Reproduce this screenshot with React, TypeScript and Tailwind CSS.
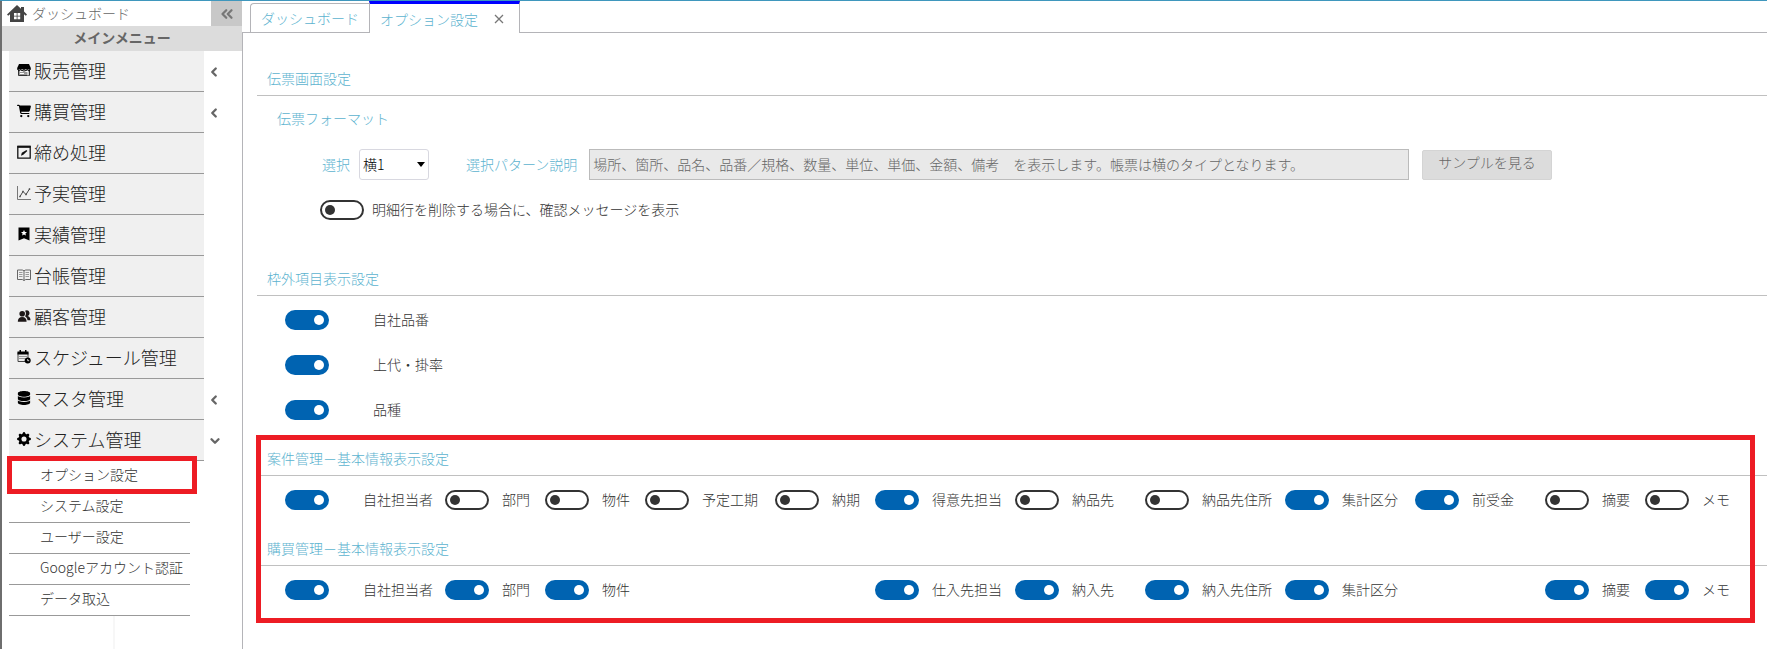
import React from "react";
import { FaCartShopping, FaDatabase } from "react-icons/fa6";
import { BsGearFill } from "react-icons/bs";
import { FiChevronLeft, FiChevronDown, FiChevronsLeft } from "react-icons/fi";

const HomeIcon = () => (
  <svg viewBox="0 0 20 18" className="h-[18px] w-5" fill="#444" aria-hidden="true">
    <path d="M10 0L0 9.500l1.200 1.200L3 9.300V17h14V9.300l1.800 1.400L20 9.500l-3-2.900V2h-3v1.800z" />
    <path d="M7 8h2.700v2.700H7zM10.500 8h2.700v2.700h-2.700zM7 11.500h2.700v2.700H7zM10.500 11.500h2.700v2.700h-2.700z" fill="#fff" />
  </svg>
);

const ShopIcon = () => (
  <svg viewBox="0 0 14 14" className="size-[14px]" aria-hidden="true">
    <path d="M2 1h10l1.800 4v1.500H.2V5z" />
    <path d="M1.500 6v6.500h11V6" fill="#999" stroke="#333" />
    <path d="M3 8.500h3M8 8.500h3v4M3 10.500h4" stroke="#fff" fill="none" />
    <path d="M.5 6.500l1.300 1.200L3.500 6.500l1.700 1.200L7 6.500l1.700 1.200 1.700-1.200 1.800 1.200 1.300-1.200" stroke="#000" fill="none" />
  </svg>
);

const CloseBookIcon = () => (
  <svg viewBox="0 0 14 14" className="size-[14px]" aria-hidden="true">
    <path d="M.8 1.500h12.400v11.700H.8z" fill="none" stroke="#111" strokeWidth="1.300" />
    <path d="M.5 1.800h13" stroke="#111" strokeWidth="2" />
    <path d="M4 10.800l.8-3L9.500 5l.8 1-4 3.700z" fill="#111" />
  </svg>
);

const ChartIcon = () => (
  <svg viewBox="0 0 14 14" className="size-[14px]" fill="none" stroke="#444" aria-hidden="true">
    <path d="M.5 0v13.500H14" stroke="#777" />
    <path d="M3 10.500l3-5 3 3 3.500-5.500" />
    <path d="M2.300 10.500h1.400M5.300 5.500h1.400M8.300 8.500h1.400M11.800 3h1.400" strokeWidth="1.600" />
  </svg>
);

const BookmarkIcon = () => (
  <svg viewBox="0 0 14 14" className="size-[14px]" aria-hidden="true">
    <path d="M1.500.5h11v13L7 11.300 1.500 13.500z" />
    <path d="M7 3l.9 1.900 2.100.2-1.600 1.400.5 2.100L7 7.500 5.100 8.600l.5-2.100L4 5.100l2.100-.2z" fill="#fff" />
  </svg>
);

const BookIcon = () => (
  <svg viewBox="0 0 14 14" className="size-[14px]" fill="none" stroke="#666" aria-hidden="true">
    <path d="M.5 2h4.800L7 2.800 8.700 2h4.800v9.500H8.700L7 12.500l-1.700-1H.5zM7 3v9.500" />
    <path d="M2 4.500h3.500M2 6.500h3.500M2 8.500h3.500M8.500 4.500H12M8.500 6.500H12M8.500 8.500H12" stroke="#999" />
  </svg>
);

const CustomerIcon = () => (
  <svg viewBox="0 0 14 14" className="size-[14px]" fill="#1c1616" aria-hidden="true">
    <circle cx="5.200" cy="4.800" r="2.800" />
    <path d="M.8 12.800c0-3 1.500-4.800 4.400-4.800s4.400 1.800 4.400 4.800z" />
    <path d="M8 1.700c2.300-1.400 4.500 0 4.500 2.200 0 1.700-1 2.800-2 3.100 2 .5 3 2 3 4.200h-3C10.300 9.300 9.300 8 8 7.300c1.200-1.600 1.300-4 0-5.600z" />
  </svg>
);

const ScheduleIcon = () => (
  <svg viewBox="0 0 14 14" className="size-[14px]" aria-hidden="true">
    <path d="M1 2.500h10v9H1z" fill="#ededed" stroke="#444" />
    <path d="M.5 1.500h11v3H.5zM2.500 0h1.500v2H2.500zM8 0h1.500v2H8z" />
    <path d="M2.500 6.500h7M2.500 8.500h5" stroke="#444" strokeDasharray="1 1" />
    <circle cx="10.700" cy="10.500" r="3" />
    <path d="M10.700 9v1.700h1.500" fill="none" stroke="#fff" strokeWidth=".8" />
  </svg>
);

type MenuItem = {
  label: string;
  icon: React.ReactNode;
  chevron?: "left" | "down";
};

const menu: MenuItem[] = [
  { label: "販売管理", icon: <ShopIcon />, chevron: "left" },
  { label: "購買管理", icon: <FaCartShopping />, chevron: "left" },
  { label: "締め処理", icon: <CloseBookIcon /> },
  { label: "予実管理", icon: <ChartIcon /> },
  { label: "実績管理", icon: <BookmarkIcon /> },
  { label: "台帳管理", icon: <BookIcon /> },
  { label: "顧客管理", icon: <CustomerIcon /> },
  { label: "スケジュール管理", icon: <ScheduleIcon /> },
  { label: "マスタ管理", icon: <FaDatabase />, chevron: "left" },
  { label: "システム管理", icon: <BsGearFill />, chevron: "down" },
];

const subMenu = ["オプション設定", "システム設定", "ユーザー設定", "Googleアカウント認証", "データ取込"];

type Option = { label: string; on: boolean } | null;

const projectOptions: Option[] = [
  { label: "自社担当者", on: true },
  { label: "部門", on: false },
  { label: "物件", on: false },
  { label: "予定工期", on: false },
  { label: "納期", on: false },
  { label: "得意先担当", on: true },
  { label: "納品先", on: false },
  { label: "納品先住所", on: false },
  { label: "集計区分", on: true },
  { label: "前受金", on: true },
  { label: "摘要", on: false },
  { label: "メモ", on: false },
];

// null keeps the column empty so both rows line up
const purchaseOptions: Option[] = [
  { label: "自社担当者", on: true },
  { label: "部門", on: true },
  { label: "物件", on: true },
  null,
  null,
  { label: "仕入先担当", on: true },
  { label: "納入先", on: true },
  { label: "納入先住所", on: true },
  { label: "集計区分", on: true },
  null,
  { label: "摘要", on: true },
  { label: "メモ", on: true },
];

function Toggle({ label, on, gap }: { label: string; on: boolean; gap: string }) {
  return (
    <label className={`flex h-5 items-center whitespace-nowrap ${gap}`}>
      <input type="checkbox" role="switch" defaultChecked={on} className="peer sr-only" />
      <span className="flex h-5 w-11 shrink-0 items-center rounded-full border-2 border-[#333] bg-white px-[3px] before:size-[10px] before:rounded-full before:bg-[#333] peer-checked:justify-end peer-checked:border-[#0063b1] peer-checked:bg-[#0063b1] peer-checked:before:bg-white" />
      <span className="pb-[3px] leading-5">{label}</span>
    </label>
  );
}

function SectionTitle({ children }: { children: React.ReactNode }) {
  return (
    <h2 className="flex h-8 items-center border-b border-[#c0c0c0] pb-1 pl-[10px] text-[#5cb3cf]">
      {children}
    </h2>
  );
}

function OptionRow({ options }: { options: Option[] }) {
  return (
    <div className="grid grid-cols-[160px_100px_100px_130px_100px_140px_130px_140px_130px_130px_100px_1fr] pt-[14px] pl-7">
      {options.map((option, i) =>
        option ? (
          <Toggle key={i} label={option.label} on={option.on} gap={i === 0 ? "gap-[34px]" : "gap-[13px]"} />
        ) : (
          <span key={i} />
        )
      )}
    </div>
  );
}

function Sidebar() {
  return (
    <aside className="flex w-[242px] shrink-0 flex-col border-l-2 border-[#6e6e6e]">
      <div className="flex h-[25px] items-stretch">
        <a href="#" className="flex flex-1 items-center gap-[5px] pb-[2px] pl-[5px] text-[#666]">
          <span className="pt-[2px]">
            <HomeIcon />
          </span>
          ダッシュボード
        </a>
        <button type="button" aria-label="メニューを閉じる" className="flex w-[31px] items-center justify-center bg-[#c8c8c8] text-[#777]">
          <FiChevronsLeft className="size-[18px]" strokeWidth={3} />
        </button>
      </div>
      <div className="flex h-[25px] items-center justify-center bg-[#dcdcdc] pb-[3px] font-bold text-[#666]">
        メインメニュー
      </div>
      <nav className="pl-[7px]">
        <ul>
          {menu.map((item) => (
            <li key={item.label} className="flex h-[41px] items-center">
              <a href="#" className="flex h-full w-[195px] items-center gap-[3px] border-b border-[#999] bg-[#f0f0f0] pb-[2px] pl-2 text-lg text-[#222]">
                <span className="text-sm text-black">{item.icon}</span>
                {item.label}
              </a>
              {item.chevron === "left" && <FiChevronLeft className="ml-[3px] size-[14px] text-[#666]" strokeWidth={4} />}
              {item.chevron === "down" && <FiChevronDown className="ml-1 size-[14px] text-[#666]" strokeWidth={4} />}
            </li>
          ))}
        </ul>
        <ul className="relative w-[181px]">
          {subMenu.map((label) => (
            <li key={label} className="h-[31px] border-b border-[#999]">
              <a href="#" className="flex h-full items-center pb-[5px] pl-[31px] text-[#333]">
                {label}
              </a>
            </li>
          ))}
          <li aria-hidden="true" className="pointer-events-none absolute -top-[5px] -right-[7px] -left-[2px] h-[38px] border-[5px] border-[#ed1c24]" />
        </ul>
      </nav>
      <div className="ml-[111px] flex-1 border-l-2 border-[#f7f7f7]" />
    </aside>
  );
}

export default function App() {
  return (
    <div className="flex min-h-screen flex-col overflow-x-hidden border-t border-[#3f97bd] bg-white font-['Noto_Sans_CJK_JP',sans-serif] text-sm font-light text-[#333]">
      <div className="flex flex-1">
        <Sidebar />
        <main className="flex min-w-0 flex-1 flex-col">
          <div className="flex h-8 items-end text-[#5cb3cf]">
            <div className="h-full w-2 border-b border-[#b4b4b8]" />
            <button type="button" className="h-[30px] w-[119px] rounded-tl border border-r-0 border-[#b4b4b8]">
              ダッシュボード
            </button>
            <div className="flex h-full w-[151px] items-center border-x border-t-3 border-x-[#b4b4b8] border-t-[#0000ff] pl-[10px]">
              <button type="button">オプション設定</button>
              <button type="button" aria-label="閉じる" className="ml-4">
                <svg viewBox="0 0 10 10" className="size-[10px]" stroke="#777" strokeWidth="1.3">
                  <path d="M1 1l8 8M9 1L1 9" />
                </svg>
              </button>
            </div>
            <div className="h-full flex-1 border-b border-[#b4b4b8]" />
          </div>

          <div className="flex-1 border-l border-[#b4b4b8] pt-[31px] pl-[14px]">
            <section>
              <SectionTitle>伝票画面設定</SectionTitle>
              <h3 className="mt-3 h-5 pl-5 leading-5 text-[#5cb3cf]">伝票フォーマット</h3>
              <div className="mt-[21px] flex h-[31px] items-center pl-[65px] text-[#5cb3cf]">
                <label htmlFor="format" className="pb-[2px]">選択</label>
                <div className="relative ml-[9px] h-full w-[70px]">
                  <select id="format" className="h-full w-full appearance-none rounded-[3px] border border-[#d8d8e0] bg-white pb-[2px] pl-[3px] text-black">
                    <option>横1</option>
                    <option>縦1</option>
                  </select>
                  <svg viewBox="0 0 8 5" className="pointer-events-none absolute top-[13px] right-1 h-[5px] w-2">
                    <path d="M0 0h8L4 5z" />
                  </svg>
                </div>
                <label htmlFor="pattern" className="ml-[37px] pb-[2px] whitespace-nowrap">選択パターン説明</label>
                <input
                  id="pattern"
                  readOnly
                  value="場所、箇所、品名、品番／規格、数量、単位、単価、金額、備考　を表示します。帳票は横のタイプとなります。"
                  className="ml-3 h-full min-w-0 flex-1 border border-[#bbb] bg-[#e9e9e9] px-[3px] pb-[2px] text-[#666]"
                />
                <button type="button" className="mr-[215px] ml-[13px] h-[30px] w-[130px] rounded-xs border border-[#d4d4d4] bg-[#dcdcdc] pb-[5px] text-[#666]">
                  サンプルを見る
                </button>
              </div>
              <div className="mt-5 pl-[63px]">
                <Toggle label="明細行を削除する場合に、確認メッセージを表示" on={false} gap="gap-2" />
              </div>
            </section>

            <section className="mt-11">
              <SectionTitle>枠外項目表示設定</SectionTitle>
              <div className="flex flex-col gap-[25px] pt-[14px] pl-7">
                <Toggle label="自社品番" on gap="gap-11" />
                <Toggle label="上代・掛率" on gap="gap-11" />
                <Toggle label="品種" on gap="gap-11" />
              </div>
            </section>

            <div className="relative mt-6 pb-6">
              <section>
                <SectionTitle>案件管理－基本情報表示設定</SectionTitle>
                <OptionRow options={projectOptions} />
              </section>
              <section className="mt-6">
                <SectionTitle>購買管理－基本情報表示設定</SectionTitle>
                <OptionRow options={purchaseOptions} />
              </section>
              <div className="pointer-events-none absolute -top-[9px] right-3 bottom-px -left-px border-[5px] border-[#ed1c24]" />
            </div>
          </div>
        </main>
      </div>
    </div>
  );
}
